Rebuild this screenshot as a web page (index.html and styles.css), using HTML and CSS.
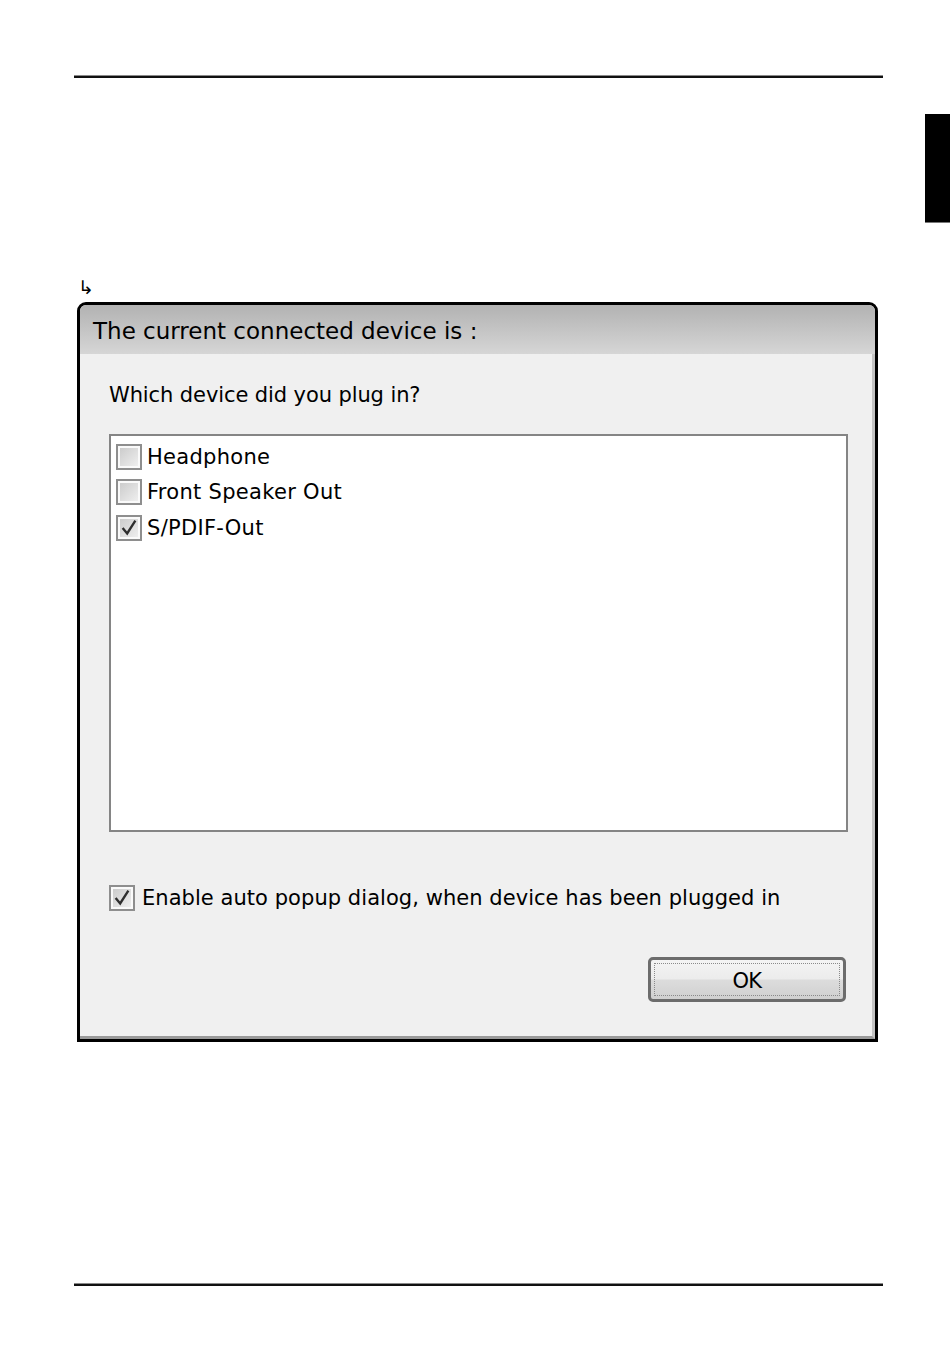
FILE: index.html
```html
<!DOCTYPE html>
<html lang="en">
<head>
    <meta charset="UTF-8">
    <title>Current connected device</title>
    <link rel="stylesheet" href="styles.css">
</head>
<body>
    <div class="page">
        <div class="rule rule-top"></div>
        <div class="thumb-tab"></div>

        <div class="step-arrow">&#8627;</div>

        <div class="dialog">
            <div class="dialog-title">The current connected device is :</div>
            <div class="dialog-body">
                <p class="question">Which device did you plug in?</p>

                <ul class="device-list">
                    <li><span class="check"></span>Headphone</li>
                    <li><span class="check"></span>Front Speaker Out</li>
                    <li>
                        <span class="check">
                            <svg viewBox="0 0 22 22" width="20" height="20"><path d="M4 11 L9 17 L18 3" fill="none" stroke="#2e2e2e" stroke-width="2.6"/></svg>
                        </span>S/PDIF-Out
                    </li>
                </ul>

                <label class="auto-popup">
                    <span class="check">
                        <svg viewBox="0 0 22 22" width="20" height="20"><path d="M4 11 L9 17 L18 3" fill="none" stroke="#2e2e2e" stroke-width="2.6"/></svg>
                    </span>Enable auto popup dialog, when device has been plugged in
                </label>

                <div class="actions">
                    <button class="ok-button"><span>OK</span></button>
                </div>
            </div>
        </div>

        <div class="rule rule-bottom"></div>
    </div>
</body>
</html>
```

FILE: styles.css
```css
* {
    box-sizing: border-box;
    margin: 0;
    padding: 0;
}

body {
    background-color: white;
    font-family: 'DejaVu Sans', 'Liberation Sans', sans-serif;
}

.page {
    position: relative;
    width: 950px;
    height: 1348px;
    padding-top: 75px;
}

.rule {
    width: 809px;
    margin-left: 74px;
    height: 3px;
    border-top: 1px solid #8a8a8a;
    background-color: #111;
}

.thumb-tab {
    position: absolute;
    top: 114px;
    right: 0;
    width: 25px;
    height: 109px;
    background-color: #000;
    border-bottom: 1px solid #777;
}

.step-arrow {
    margin: 199px 0 0 78px;
    height: 25px;
    font-size: 19px;
    line-height: 20px;
    color: #000;
}

.dialog {
    width: 801px;
    margin-left: 77px;
    border: 3px solid #000;
    border-radius: 9px 9px 0 0;
    background-color: #f0f0f0;
    overflow: hidden;
}

.dialog-title {
    height: 49px;
    padding: 12px 0 0 13px;
    background: linear-gradient(#b2b2b2, #d6d6d6);
    font-size: 23px;
    line-height: 28px;
    color: #000;
}

.dialog-body {
    padding: 27px 0 34px 29px;
    border-right: 3px solid #c4c4c4;
    border-bottom: 3px solid #9a9a9a;
    font-size: 21px;
    color: #000;
}

.question {
    height: 53px;
    line-height: 29px;
    letter-spacing: -0.1px;
}

.device-list {
    list-style: none;
    width: 739px;
    height: 398px;
    padding: 3px 5px;
    border: 2px solid #858585;
    background-color: white;
}

.device-list li {
    display: flex;
    align-items: center;
    height: 35.5px;
    line-height: 26px;
    letter-spacing: 0.3px;
}

.check {
    display: inline-flex;
    align-items: center;
    justify-content: center;
    flex-shrink: 0;
    width: 26px;
    height: 26px;
    margin-right: 5px;
    border: 2px solid #8e8e8e;
    outline: 2px solid #fafafa;
    outline-offset: -4px;
    background: linear-gradient(135deg, #c8c8c8, #f2f2f2);
}

.auto-popup {
    display: flex;
    align-items: center;
    margin-top: 52px;
    height: 28px;
    letter-spacing: 0.05px;
}

.auto-popup .check {
    margin-right: 7px;
}

.actions {
    display: flex;
    justify-content: flex-end;
    margin-top: 45px;
    padding-right: 26px;
}

.ok-button {
    width: 198px;
    height: 45px;
    padding: 3px;
    border: 3px solid #6c6c6c;
    border-radius: 5px;
    background: linear-gradient(#f4f4f4 0%, #ececec 48%, #dcdcdc 52%, #d0d0d0 100%);
    font-family: 'DejaVu Sans', 'Liberation Sans', sans-serif;
    font-size: 21px;
    letter-spacing: -0.6px;
    color: #000;
}

.ok-button span {
    display: flex;
    align-items: center;
    justify-content: center;
    height: 100%;
    padding-top: 3px;
    border: 1px dotted #8a8a8a;
}

.rule-bottom {
    margin-top: 241px;
}
```
